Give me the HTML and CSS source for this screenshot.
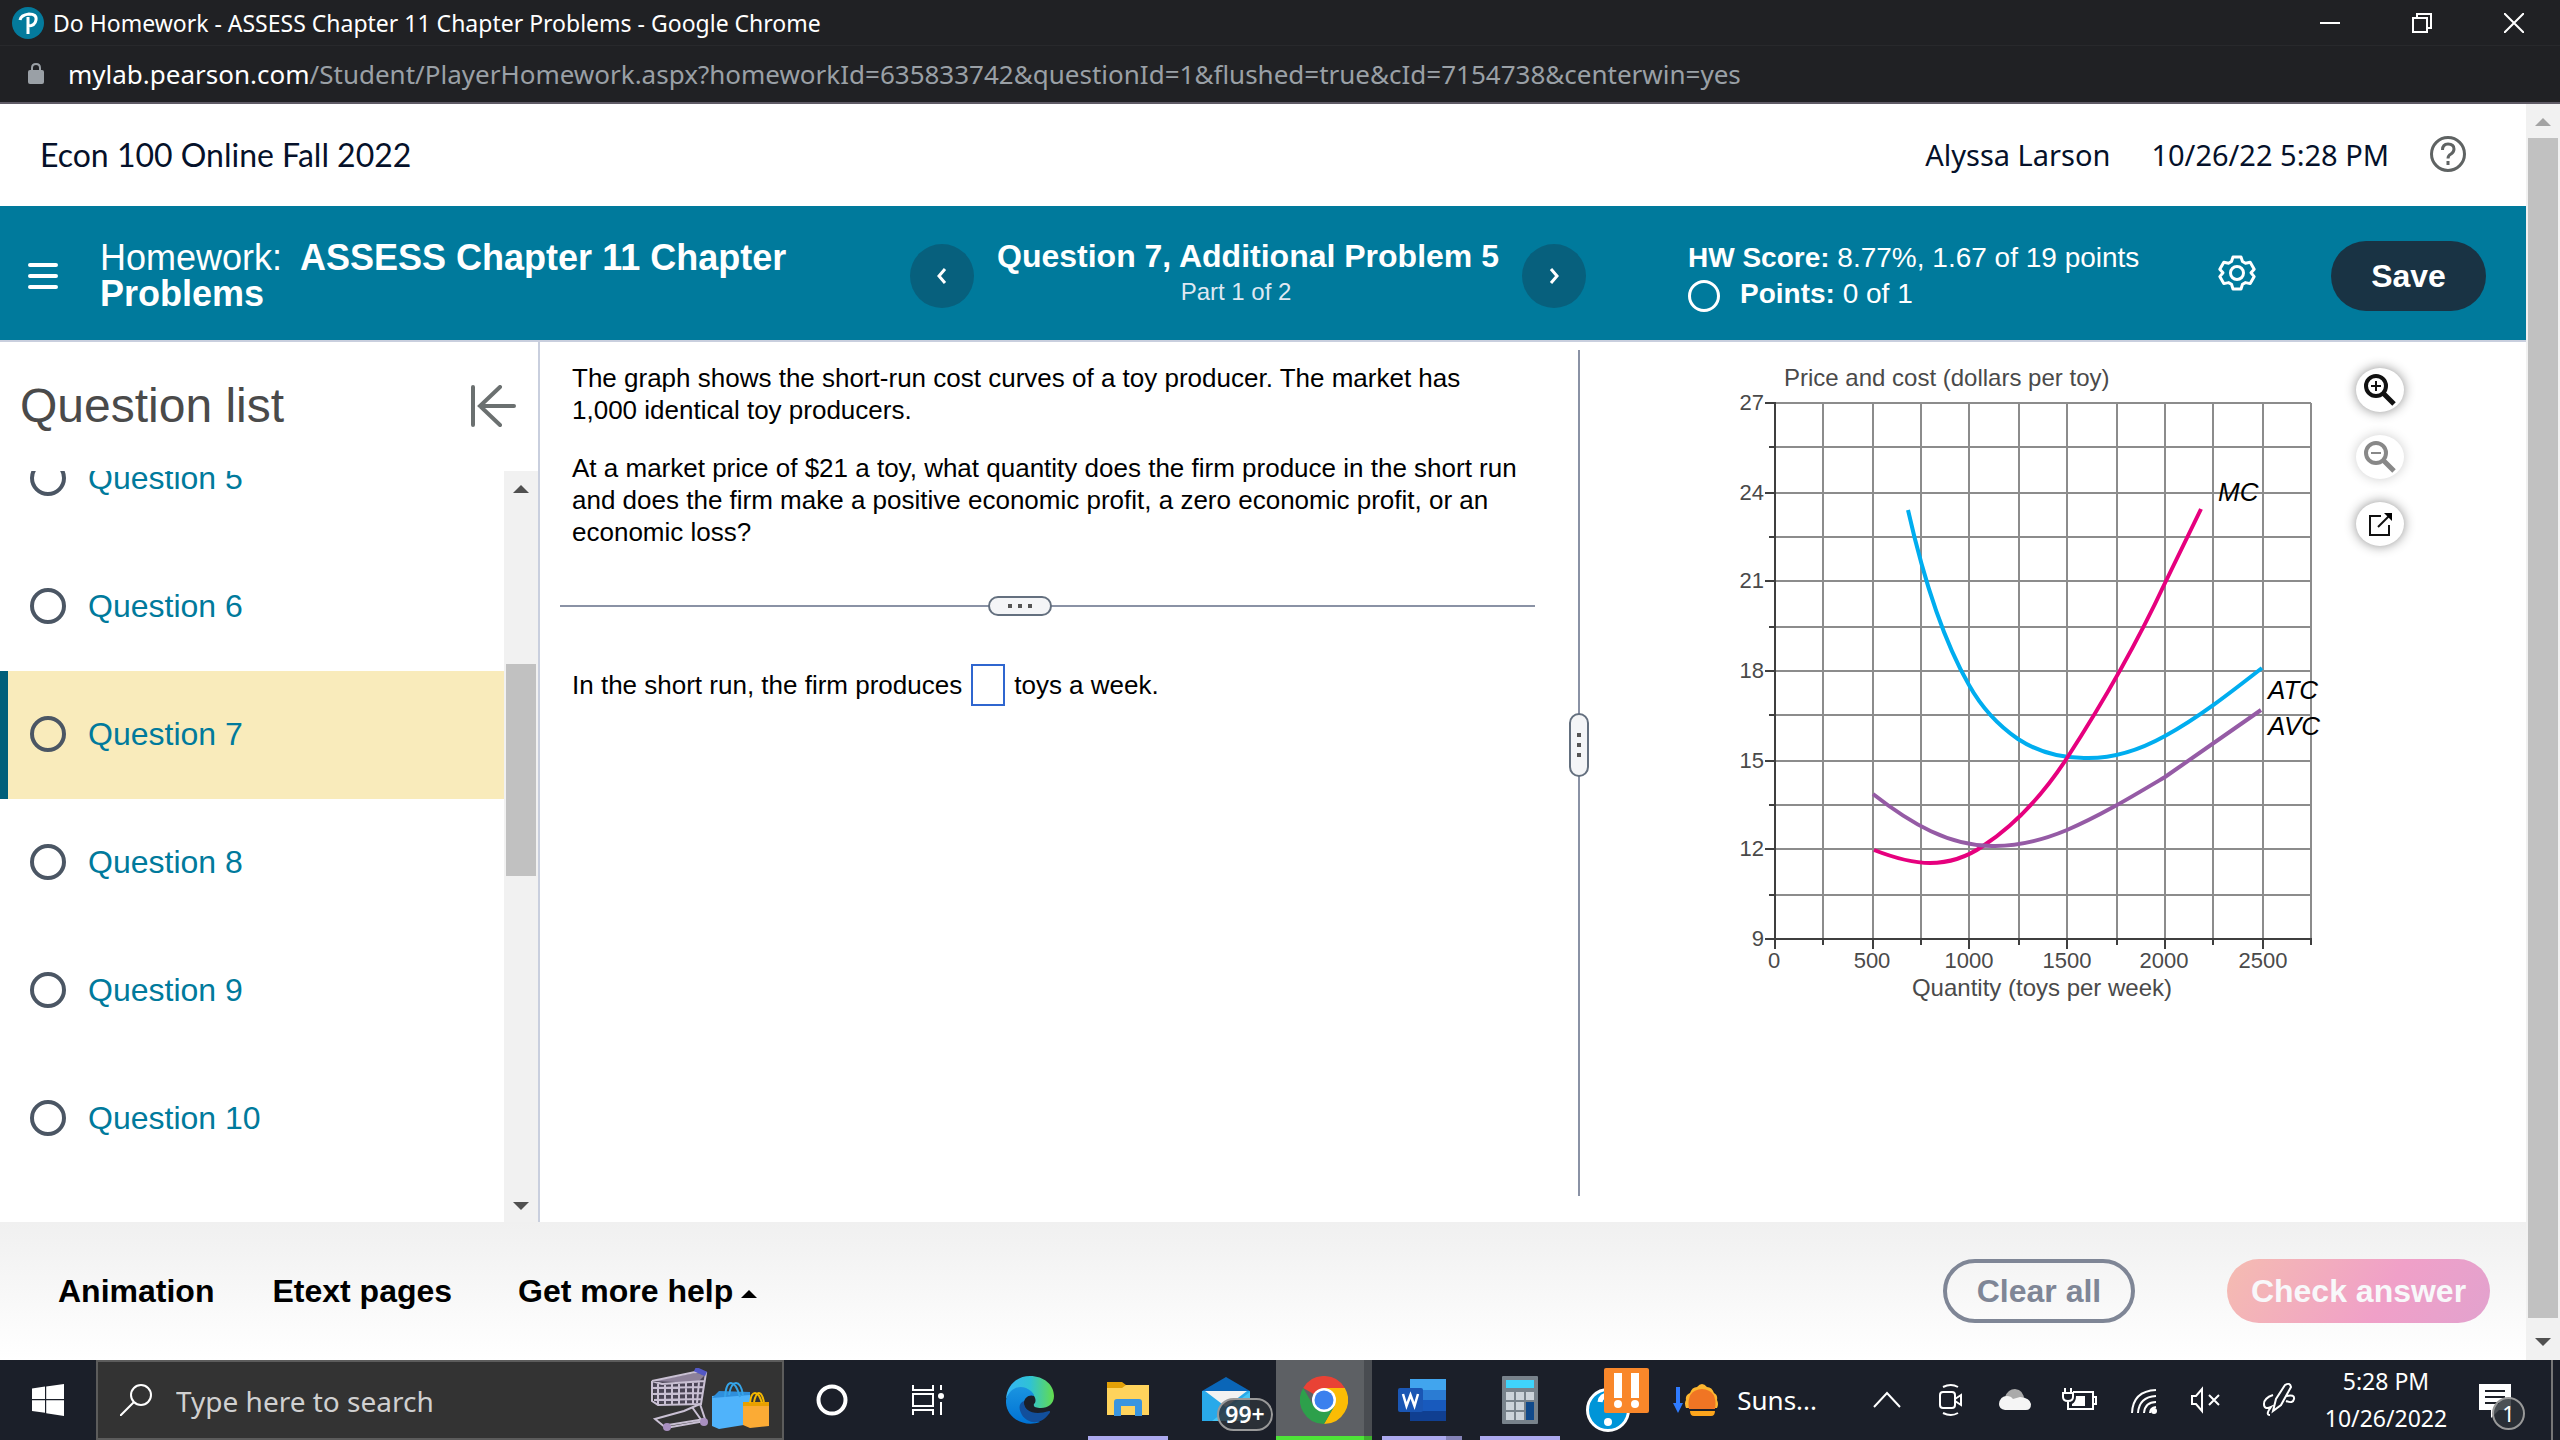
FILE: index.html
```html
<!DOCTYPE html>
<html lang="en">
<head>
  <meta charset="UTF-8">
  <meta name="viewport" content="width=device-width, initial-scale=1.0">
  <title>Do Homework - ASSESS Chapter 11 Chapter Problems</title>
  <link rel="stylesheet" href="styles.css">
</head>
<body>
  <!-- Browser window -->
  <header class="window-bar">
    <svg class="favicon" viewBox="0 0 32 32"><circle cx="16" cy="16" r="16" fill="#047a9c"/><path d="M8 13q1-5 9-6 8 0 7 6-1 6-8 6M16 10v17" fill="none" stroke="#fff" stroke-width="3"/></svg>
    <span class="window-title">Do Homework - ASSESS Chapter 11 Chapter Problems - Google Chrome</span>
    <div class="window-controls">
      <button aria-label="Minimize"><svg viewBox="0 0 20 20"><path d="M0 10h20"/></svg></button>
      <button aria-label="Restore"><svg viewBox="0 0 20 20"><path d="M1 5h14v14H1zM5 5V1h14v14h-4"/></svg></button>
      <button aria-label="Close"><svg viewBox="0 0 20 20"><path d="M0 0l20 20M20 0L0 20"/></svg></button>
    </div>
  </header>
  <div class="url-bar">
    <svg class="lock" viewBox="0 0 16 22"><rect y="7" width="16" height="14" rx="2" fill="#9aa0a6"/><path d="M4 8V5q0-4 4-4t4 4v3" fill="none" stroke="#9aa0a6" stroke-width="2"/></svg>
    <span><b>mylab.pearson.com</b>/Student/PlayerHomework.aspx?homeworkId=635833742&amp;questionId=1&amp;flushed=true&amp;cId=7154738&amp;centerwin=yes</span>
  </div>

  <div class="viewport">
    <div class="page">
      <div class="course-bar">
        <span class="course-name">Econ 100 Online Fall 2022</span>
        <span class="user-name">Alyssa Larson</span>
        <span class="user-name">10/26/22 5:28 PM</span>
        <button class="help" aria-label="Help"><svg viewBox="0 0 36 36"><circle cx="18" cy="18" r="16.500"/><path d="M12.500 14q0-6 5.500-6 6 0 6 5 0 3-3 5-3 1.500-3 4.500M18 25v4"/></svg></button>
      </div>

      <div class="hw-bar">
        <div class="hw-left">
          <button class="menu" aria-label="Menu"><svg viewBox="0 0 30 26"><path d="M2 2h26M2 13h26M2 24h26"/></svg></button>
          <h1>Homework: <b>ASSESS Chapter 11 Chapter Problems</b></h1>
        </div>
        <nav class="question-nav">
          <button class="round-nav" aria-label="Previous question"><svg viewBox="0 0 10 16"><path d="M8 1L2 8l6 7"/></svg></button>
          <div class="question-name">
            <h2>Question 7, Additional Problem 5</h2>
            <p>Part 1 of 2</p>
          </div>
          <button class="round-nav" aria-label="Next question"><svg viewBox="0 0 10 16"><path d="M2 1l6 7-6 7"/></svg></button>
        </nav>
        <div class="score">
          <p><b>HW Score:</b> 8.77%, 1.67 of 19 points</p>
          <p class="points"><span class="score-circle"></span><span><b>Points:</b> 0 of 1</span></p>
        </div>
        <button class="settings" aria-label="Settings"><svg viewBox="0 0 36 36"><path d="M14 2h8l1.500 4.500 3 1.700 4.700-1 4 7-3.200 3.600 3.200 3.800-4 7-4.700-1-3 1.700L22 34h-8l-1.500-4.700-3-1.700-4.700 1-4-7L4 17.800.8 14.200l4-7 4.700 1 3-1.700z"/><circle cx="18" cy="18" r="6.500"/></svg></button>
        <button class="save">Save</button>
      </div>

      <main class="workspace">
        <aside class="sidebar">
          <div class="sidebar-head">
            <h2>Question list</h2>
            <button aria-label="Collapse question list"><svg viewBox="0 0 46 42"><path d="M3 2v38M44 21H10M30 2L10 21l20 19"/></svg></button>
          </div>
          <div class="list-window">
            <ul class="question-list">
              <li><a href="#"><i></i>Question 5</a></li>
              <li><a href="#"><i></i>Question 6</a></li>
              <li class="active"><a href="#"><i></i>Question 7</a></li>
              <li><a href="#"><i></i>Question 8</a></li>
              <li><a href="#"><i></i>Question 9</a></li>
              <li><a href="#"><i></i>Question 10</a></li>
            </ul>
            <div class="scrollbar list-scroll">
              <span class="arrow up"></span>
              <span class="thumb"></span>
              <span class="arrow down"></span>
            </div>
          </div>
        </aside>

        <section class="question">
          <div class="question-text">
            <p>The graph shows the short-run cost curves of a toy producer. The market has 1,000 identical toy producers.</p>
            <p>At a market price of $21 a toy, what quantity does the firm produce in the short run and does the firm make a positive economic profit, a zero economic profit, or an economic loss?</p>
          </div>
          <div class="divider"><button class="grip" aria-label="Resize"><i></i><i></i><i></i></button></div>
          <div class="answer">
            <label for="quantity">In the short run, the firm produces</label>
            <input id="quantity" type="text">
            <span>toys a week.</span>
          </div>
        </section>

        <div class="divider-v"><button class="grip grip-v" aria-label="Resize panes"><i></i><i></i><i></i></button></div>

        <section class="graph">
          <svg class="chart" viewBox="0 0 640 660">
            <path class="grid" d="M123 53v536M173 53v536M221 53v536M269 53v536M319 53v536M367 53v536M417 53v536M465 53v536M513 53v536M563 53v536M611 53v536M75 53h536M75 97h536M75 143h536M75 187h536M75 231h536M75 277h536M75 321h536M75 365h536M75 411h536M75 455h536M75 499h536M75 545h536"/>
            <path class="axis" d="M75 52v547M65 589h547M65 53h10M65 143h10M65 231h10M65 321h10M65 411h10M65 499h10M69 97h6M69 187h6M69 277h6M69 365h6M69 455h6M69 545h6M173 589v10M269 589v10M367 589v10M465 589v10M563 589v10M123 589v6M221 589v6M319 589v6M417 589v6M513 589v6M611 589v6"/>
            <path class="curve atc" d="M208 160C220 213 239 283 269 335C283 360 299 376 318 389C338 402 360 408 384 408C412 409 438 401 465 386C498 368 530 343 562 318"/>
            <path class="curve mc" d="M174 500C192 507 210 513 230 513C250 513 267 507 283 496C313 476 343 445 367 408C404 351 437 293 465 233L501 159"/>
            <path class="curve avc" d="M173 444C210 473 250 497 295 496C318 496 343 490 367 480C400 466 433 446 465 427L561 360"/>
            <text class="axis-title" x="84" y="36">Price and cost (dollars per toy)</text>
            <g class="ticks end">
              <text x="64" y="60">27</text>
              <text x="64" y="150">24</text>
              <text x="64" y="238">21</text>
              <text x="64" y="328">18</text>
              <text x="64" y="418">15</text>
              <text x="64" y="506">12</text>
              <text x="64" y="596">9</text>
            </g>
            <g class="ticks mid">
              <text x="74" y="618">0</text>
              <text x="172" y="618">500</text>
              <text x="269" y="618">1000</text>
              <text x="367" y="618">1500</text>
              <text x="464" y="618">2000</text>
              <text x="563" y="618">2500</text>
              <text class="axis-title" x="342" y="646">Quantity (toys per week)</text>
            </g>
            <g class="curve-names">
              <text x="518" y="151">MC</text>
              <text x="568" y="349">ATC</text>
              <text x="568" y="385">AVC</text>
            </g>
          </svg>
          <div class="graph-tools">
            <button aria-label="Zoom in"><svg viewBox="0 0 32 32"><circle cx="12" cy="12" r="10" stroke-width="4"/><path d="M12 7v10M7 12h10" stroke-width="2"/><path d="M19 19l11 11" stroke-width="5"/></svg></button>
            <button aria-label="Zoom out" disabled><svg viewBox="0 0 32 32"><circle cx="12" cy="12" r="10" stroke-width="4"/><path d="M7 12h10" stroke-width="2"/><path d="M19 19l11 11" stroke-width="5"/></svg></button>
            <button aria-label="Open in new window"><svg viewBox="0 0 32 32"><path d="M17 8H6v19h19V17" stroke-width="2"/><path d="M14 19L25 8" stroke-width="2"/><path d="M20 5h8v8z" fill="#000" stroke="none"/></svg></button>
          </div>
        </section>
      </main>

      <footer class="actions">
        <a href="#">Animation</a>
        <a href="#">Etext pages</a>
        <a href="#" class="more-help">Get more help<span class="arrow up"></span></a>
        <button class="clear">Clear all</button>
        <button class="check">Check answer</button>
      </footer>
    </div>
    <div class="scrollbar page-scroll">
      <span class="arrow up"></span>
      <span class="thumb"></span>
      <span class="arrow down"></span>
    </div>
  </div>

  <!-- Windows taskbar -->
  <div class="taskbar">
    <button class="start" aria-label="Start"><svg viewBox="0 0 32 32" fill="#fff"><path d="M0 4.500L13 2.600V15H0zM14.200 2.400L32 0v15H14.200zM0 16.200h13v12.500L0 27zM14.200 16.200H32V32l-17.800-2.700z"/></svg></button>
    <div class="search">
      <svg class="magnifier" viewBox="0 0 32 32"><circle cx="21" cy="11" r="10"/><path d="M14 18L0 32"/></svg>
      <input type="text" placeholder="Type here to search" aria-label="Type here to search">
      <svg class="shopping" viewBox="0 0 120 64">
        <path d="M2 14L45 4 56 6 50 36 5 35z" fill="#4a4455"/>
        <path d="M3 13L45 5l10 2-8 8z" fill="#8d8199"/>
        <g fill="none" stroke="#c9c0d3" stroke-width="2">
          <path d="M2 13v20l6 4 43-1 5-31-11-1L2 13l10 3 42-3M2 20l52-1M3 26l50-1M4 32l48-1M8 15v21M15 16v20M22 16v20M29 15v21M36 15v21M43 14v22M49 14l-2 21"/>
          <path d="M50 36l5 15-37 6M50 36L34 43 5 51l11 9 39-7M42 39l10 14"/>
        </g>
        <path d="M45 1l11 5" stroke="#5358c6" stroke-width="5"/>
        <circle cx="17" cy="59" r="4" fill="#a88fc0"/><circle cx="54" cy="54" r="4" fill="#a88fc0"/>
        <path d="M62 28l38-4v32l-31 5-7-3z" fill="#4fb3fb"/><path d="M62 30l38-3v-3l-31-1z" fill="#2f8fdc"/>
        <path d="M75 29q1-14 6-14t9 14M79 27q2-12 7-12t7 12" fill="none" stroke="#35a4e8" stroke-width="2"/>
        <path d="M93 34h26v24l-19 2-7-3z" fill="#fbab35"/><path d="M93 34h26v4H93z" fill="#e9a000"/>
        <path d="M100 35q1-10 5-10t7 10M104 34q2-9 5-9t5 9" fill="none" stroke="#f5b800" stroke-width="2"/>
      </svg>
    </div>
    <div class="system-apps">
      <button class="task" aria-label="Cortana"><svg viewBox="0 0 48 48"><circle cx="24" cy="24" r="13.500" fill="none" stroke="#fff" stroke-width="4"/></svg></button>
      <button class="task" aria-label="Task view"><svg viewBox="0 0 48 48" fill="none" stroke="#fff" stroke-width="2"><path d="M9 9v5h20V9M9 18h20v12H9zM9 39v-5h20v5M37 9v5M37 26v13"/><circle cx="37" cy="20" r="3" fill="#fff" stroke="none"/></svg></button>
    </div>
    <div class="apps">
      <button class="task" aria-label="Edge">
        <svg viewBox="0 0 48 48">
          <defs>
            <linearGradient id="edgeTop"><stop offset="0" stop-color="#35b4f5"/><stop offset=".5" stop-color="#2fc2d5"/><stop offset="1" stop-color="#64dc4c"/></linearGradient>
            <linearGradient id="edgeSide" x2="0" y2="1"><stop offset="0" stop-color="#1a94e0"/><stop offset="1" stop-color="#0072d4"/></linearGradient>
          </defs>
          <path d="M0 23C1 9 11 0 24 0c14 0 24 9 24 20 0 8-6 12-13 12-5 0-8-1-7-4 2-2 2-5 0-8C23 11 8 9 0 23z" fill="url(#edgeTop)"/>
          <path d="M0 24C3 13 12 9 20 12q7 3 8 8c-5-2-11 2-10 9 1 8 7 13 16 17C17 52-1 41 0 24z" fill="url(#edgeSide)"/>
          <path d="M18 25c-1 10 10 15 25 10 2 0 1 2-1 4-8 10-20 9-26 0-4-7-3-12 2-14z" fill="#124f9c"/>
        </svg>
      </button>
      <button class="task open" aria-label="File Explorer"><svg viewBox="0 0 48 48"><path d="M3 6h15l4 3h21v10H3z" fill="#e3a007"/><path d="M3 12h15l4-3h23v30H3z" fill="#ffd35c"/><path d="M10 40V26q0-3 3-3h22q3 0 3 3v14h-7V30H17v10z" fill="#3a95df"/></svg></button>
      <button class="task" aria-label="Mail">
        <svg viewBox="0 0 48 48"><path d="M0 15L24 1l24 14z" fill="#0a66b8"/><path d="M0 15h48v30H0z" fill="#29a9e9"/><path d="M3 15h42L24 31z" fill="#f2f2f2"/><path d="M48 16L10 45h38z" fill="#47c6f4"/></svg>
        <span class="count">99+</span>
      </button>
      <button class="task current" aria-label="Chrome"><svg viewBox="0 0 48 48"><path d="M24 24L3.200 12A24 24 0 0 1 44.800 12z" fill="#e94235"/><path d="M24 12h20.800A24 24 0 0 1 24 48l10.400-18z" fill="#fbbc05"/><path d="M3.200 12A24 24 0 0 0 24 48l10.400-18H13.600z" fill="#2da04b"/><circle cx="24" cy="24" r="12" fill="#fff"/><circle cx="24" cy="24" r="9.500" fill="#3b80ee"/></svg></button>
      <button class="task open many" aria-label="Word"><svg viewBox="0 0 48 48"><path d="M12 3h36v11H12z" fill="#41a5ee"/><path d="M12 14h36v10H12z" fill="#2b7cd3"/><path d="M12 24h36v11H12z" fill="#185abd"/><path d="M12 35h36v10H12z" fill="#103f91"/><rect y="12" width="25" height="24" rx="2" fill="#1a56b4"/><path d="M5 18l3.500 12 4-11 4 11L20 18" fill="none" stroke="#fff" stroke-width="2.500"/></svg></button>
      <button class="task open" aria-label="Calculator"><svg viewBox="0 0 48 48"><rect x="6" width="36" height="48" rx="1" fill="#78828b"/><path d="M10 4h28v8H10z" fill="#3fd3fb"/><path d="M10 16h8v8h-8zM20 16h8v8h-8zM30 16h8v8h-8zM10 26h8v8h-8zM20 26h8v8h-8zM10 36h8v8h-8zM20 36h8v8h-8z" fill="#ccd3da"/><path d="M30 26h8v18h-8z" fill="#114a8b"/></svg></button>
      <button class="task" aria-label="Support"><svg class="support" viewBox="0 0 64 64"><circle cx="22" cy="42" r="20.500" fill="#0095d8" stroke="#fff" stroke-width="3"/><path d="M14 34q1-7 9-7" fill="none" stroke="#fff" stroke-width="5"/><circle cx="22" cy="54" r="4" fill="#fff"/><rect x="18" width="45" height="45" rx="2" fill="#f9872a"/><path d="M28 5h8v25h-8zM45 5h8v25h-8z" fill="#fff"/><circle cx="32" cy="36" r="4" fill="#fff"/><circle cx="49" cy="36" r="4" fill="#fff"/></svg></button>
    </div>
    <div class="weather">
      <svg viewBox="0 0 48 34"><path d="M3 4v16H0l5 10 5-10H7V4z" fill="#2f7bff"/><path d="M13 25q-2-5 0-8-1-5 4-7 2-6 7-6 5-6 10 0 5 0 7 6 4 2 3 7 2 4 0 8z" fill="#fdb62f"/><path d="M16 26q-3-19 13-20 16 1 13 20z" fill="#f07524"/><path d="M17 28h25q0 5-4 5H21q-4 0-4-5z" fill="#fda51c"/></svg>
      <span>Suns...</span>
    </div>
    <div class="tray">
      <button aria-label="Hidden icons"><svg viewBox="0 0 36 36"><path d="M5 25l13-14 13 14"/></svg></button>
      <button aria-label="Meet now"><svg viewBox="0 0 36 36"><rect x="7" y="10" width="15" height="16" rx="3"/><path d="M22 17l6-4v10l-6-4M10 5q8-4 15 0M10 31q8 4 15 0"/></svg></button>
      <button aria-label="OneDrive"><svg viewBox="0 0 36 36"><path d="M8 15q3-8 10-8 9 1 9 11v8z" fill="#aaa" stroke="none"/><path d="M8 28q-6-1-6-6 1-8 8-8 4 0 6 3l7-2q10 1 11 7 0 6-5 6z" fill="#f5f5f5" stroke="none"/></svg></button>
      <button aria-label="Battery"><svg viewBox="0 0 36 36"><path d="M12 10h20v17H7v-7M32 15h3v7h-3M2 11h10v4q0 4-5 4t-5-4zM4 6v5M10 6v5"/><path d="M15 14h9v10H11v-2q4-2 4-8z" fill="#fff" stroke="none"/></svg></button>
      <button aria-label="Wi-Fi"><svg viewBox="0 0 36 36"><path d="M7 31Q8 9 31 8M13 31q1-16 18-17M19 31q1-11 12-11M25 31q0-5 6-6"/><circle cx="29" cy="29" r="3" fill="#fff" stroke="none"/></svg></button>
      <button aria-label="Volume"><svg viewBox="0 0 36 36"><path d="M3 14h4l6-7v22l-6-7H3zM20 13l10 10M30 13L20 23"/></svg></button>
      <button class="pen" aria-label="Windows Ink"><svg viewBox="0 0 36 36"><path d="M12 29l3-12L24 3q5-3 6 2L20 23zM12 13q-9 3-9 9t7 3q-6 8-1 8M25 14q9-2 8 3t-8 2"/></svg></button>
      <div class="clock"><span>5:28 PM</span><span>10/26/2022</span></div>
      <button class="notes" aria-label="Notifications">
        <svg viewBox="0 0 36 36"><path d="M2 2h32v26H22l-8 8v-8H2z" fill="#fff" stroke="none"/><path d="M8 9h20M8 15h20M8 21h14" stroke="#1c1f27"/></svg>
        <span class="note-count">1</span>
      </button>
    </div>
  </div>
</body>
</html>
```
FILE: styles.css
```css
* {
  box-sizing: border-box;
}

body {
  margin: 0;
  min-height: 100vh;
  display: flex;
  flex-direction: column;
  font-family: "Liberation Sans", Arial, sans-serif;
  background-color: #fff;
  color: #000;
}

h1, h2, p, ul {
  margin: 0;
  padding: 0;
}

button {
  display: flex;
  align-items: center;
  justify-content: center;
  padding: 0;
  border: none;
  background: none;
  font-family: inherit;
  color: inherit;
  cursor: pointer;
}

a {
  color: inherit;
  text-decoration: none;
}

svg {
  display: block;
}

/* Browser window */

.window-bar {
  height: 46px;
  display: flex;
  align-items: center;
  padding-left: 12px;
  background-color: #202124;
  border-bottom: 1px solid #28292c;
  color: #fff;
  font-family: "Noto Sans", sans-serif;
  font-size: 23px;
}

.favicon {
  width: 32px;
  height: 32px;
  margin-right: 9px;
}

.window-controls {
  display: flex;
  margin-left: auto;
}

.window-controls button {
  width: 92px;
  height: 44px;
}

.window-controls svg {
  width: 20px;
  height: 20px;
  fill: none;
  stroke: #fff;
  stroke-width: 2;
}

.url-bar {
  height: 58px;
  display: flex;
  align-items: center;
  gap: 24px;
  padding-left: 28px;
  background-color: #202124;
  border-bottom: 2px solid #5f5b66;
  color: #9aa0a6;
  font-family: "Noto Sans", sans-serif;
  font-size: 26px;
}

.url-bar b {
  color: #fff;
  font-weight: 400;
}

.lock {
  width: 16px;
  height: 22px;
}

.viewport {
  flex: 1;
  display: flex;
}

.page {
  flex: 1;
  display: flex;
  flex-direction: column;
}

/* Scrollbars */

.scrollbar {
  width: 34px;
  display: flex;
  flex-direction: column;
  align-items: center;
  background-color: #f1f1f1;
}

.thumb {
  width: 30px;
  background-color: #c1c1c1;
}

.arrow {
  border: 8px solid transparent;
}

.arrow.up {
  border-top: none;
  border-bottom-color: #505050;
}

.arrow.down {
  border-bottom: none;
  border-top-color: #505050;
}

.page-scroll {
  padding: 14px 0;
  justify-content: space-between;
}

.page-scroll .thumb {
  flex: 1;
  margin: 12px 0 20px;
}

.page-scroll .arrow.up {
  border-bottom-color: #a3a3a3;
}

/* Course header */

.course-bar {
  height: 102px;
  display: flex;
  align-items: center;
  padding: 0 60px 2px 40px;
  color: #05112a;
}

.course-name {
  margin-right: auto;
  font-family: Lato, sans-serif;
  font-size: 32px;
}

.user-name {
  margin-right: 41px;
  font-family: "Noto Sans", sans-serif;
  font-size: 29px;
}

.help svg {
  width: 36px;
  height: 36px;
  fill: none;
  stroke: #5f6363;
  stroke-width: 3;
}

.hw-bar {
  height: 136px;
  display: grid;
  grid-template-columns: minmax(600px, 882px) auto 1fr auto auto;
  align-items: center;
  padding: 6px 40px 0 28px;
  background-color: #007a9c;
  border-bottom: 2px solid #c9cfde;
  color: #fff;
}

.hw-left {
  display: flex;
  align-items: center;
  gap: 42px;
  padding-right: 100px;
}

.menu svg {
  width: 30px;
  height: 26px;
  stroke: #fff;
  stroke-width: 4;
  stroke-linecap: round;
}

h1 {
  font-size: 36px;
  line-height: 36px;
  font-weight: 400;
}

h1 b {
  margin-left: 8px;
}

.question-nav {
  display: flex;
  align-items: center;
}

.round-nav {
  width: 64px;
  height: 64px;
  border-radius: 50%;
  background-color: #07607d;
}

.round-nav svg {
  width: 10px;
  height: 16px;
  fill: none;
  stroke: #fff;
  stroke-width: 3;
}

.question-name {
  width: 548px;
  margin-bottom: 8px;
  text-align: center;
}

.question-name h2 {
  font-size: 32px;
  line-height: 40px;
}

.question-name p {
  padding-right: 24px;
  font-size: 24px;
  line-height: 32px;
  color: #dfe8f2;
}

.score {
  padding-left: 102px;
  font-size: 28px;
  line-height: 36px;
}

.points {
  display: flex;
  align-items: center;
  gap: 20px;
}

.score-circle {
  width: 32px;
  height: 32px;
  margin-top: 4px;
  border: 3px solid #fff;
  border-radius: 50%;
}

.settings svg {
  width: 36px;
  height: 36px;
  margin: 0 76px 6px 0;
  fill: none;
  stroke: #fff;
  stroke-width: 3;
  stroke-linejoin: round;
  overflow: visible;
}

.save {
  width: 155px;
  height: 70px;
  border-radius: 35px;
  background-color: #193344;
  font-size: 32px;
  font-weight: 700;
}

/* Workspace */

.workspace {
  flex: 1;
  display: grid;
  grid-template-columns: 540px minmax(0, 1029px) 20px 1fr;
}

.sidebar {
  display: flex;
  flex-direction: column;
  border-right: 2px solid #c9cfde;
}

.sidebar-head {
  height: 129px;
  display: flex;
  align-items: center;
  justify-content: space-between;
  padding: 0 22px 2px 20px;
}

.sidebar-head h2 {
  font-size: 48px;
  font-weight: 400;
  color: #4a4a4a;
}

.sidebar-head svg {
  width: 46px;
  height: 42px;
  fill: none;
  stroke: #6b7070;
  stroke-width: 4;
  stroke-linecap: round;
}

.list-window {
  flex: 1;
  display: flex;
  height: 750px;
  overflow: hidden;
}

/* list is scrolled part way down */
.question-list {
  flex: 1;
  margin-top: -56px;
  list-style: none;
}

.question-list a {
  height: 128px;
  display: flex;
  align-items: center;
  gap: 22px;
  padding: 0 0 2px 22px;
  border-left: 8px solid transparent;
  font-size: 32px;
  color: #007a9c;
}

.question-list i {
  width: 36px;
  height: 36px;
  border: 4px solid #4b5664;
  border-radius: 50%;
}

.question-list .active a {
  border-left-color: #005f7a;
  background-color: #f9ebbb;
}

.list-scroll {
  padding: 14px 0 12px;
}

.list-scroll .thumb {
  height: 212px;
  margin: 171px 0 auto;
}

.question {
  padding: 20px 34px 0 20px;
  font-size: 26px;
  line-height: 32px;
}

.question-text {
  padding: 0 12px;
}

.question-text p {
  margin-bottom: 26px;
}

.divider {
  height: 2px;
  display: flex;
  align-items: center;
  justify-content: center;
  margin: 57px 0;
  padding-right: 56px;
  background-color: #8a92a5;
}

.grip {
  width: 64px;
  height: 20px;
  flex: none;
  gap: 6px;
  border: 2px solid #64707f;
  border-radius: 10px;
  background-color: #f4f5f7;
}

.grip i {
  width: 4px;
  height: 4px;
  background-color: #555;
}

.divider-v {
  display: flex;
  align-items: center;
  justify-content: center;
  margin: 8px 0 26px;
  background: linear-gradient(#8a92a5, #8a92a5) center / 2px 100% no-repeat;
}

.grip-v {
  width: 20px;
  height: 64px;
  flex-direction: column;
  margin-top: -56px;
}

.answer {
  display: flex;
  align-items: center;
  gap: 9px;
  padding: 0 12px;
}

.answer input {
  width: 34px;
  height: 42px;
  border: 2px solid #2f66cf;
  font-size: 26px;
}

.graph {
  display: flex;
  align-items: flex-start;
  gap: 16px;
  padding: 8px 0 0 111px;
}

.chart {
  width: 640px;
  height: 660px;
  fill: #4a4a4a;
}

.grid {
  fill: none;
  stroke: #8c8c8c;
  stroke-width: 2;
}

.axis {
  fill: none;
  stroke: #3f3f3f;
  stroke-width: 2;
}

.curve {
  fill: none;
  stroke-width: 4;
}

.atc {
  stroke: #00adef;
}

.mc {
  stroke: #e6007e;
}

.avc {
  stroke: #955ba5;
}

.ticks {
  font-size: 22px;
}

.end {
  text-anchor: end;
}

.mid {
  text-anchor: middle;
}

.axis-title {
  font-size: 24px;
}

.curve-names {
  font-size: 26px;
  font-style: italic;
  fill: #000;
}

.graph-tools {
  display: flex;
  flex-direction: column;
  gap: 23px;
  padding-top: 18px;
}

.graph-tools button {
  width: 48px;
  height: 44px;
  border-radius: 50%;
  background-color: #fff;
  box-shadow: 0 0 12px rgba(0, 0, 0, .45);
}

.graph-tools button:disabled {
  box-shadow: 0 0 12px rgba(0, 0, 0, .2);
}

.graph-tools svg {
  width: 32px;
  height: 32px;
  fill: none;
  stroke: #111;
}

.graph-tools button:disabled svg {
  stroke: #888;
}

/* Bottom actions */

.actions {
  height: 138px;
  display: flex;
  align-items: center;
  gap: 58px;
  padding: 0 36px 0 58px;
  background: linear-gradient(#f0f0f0, #fff);
  font-size: 32px;
  font-weight: 700;
}

.more-help {
  display: flex;
  align-items: center;
  gap: 8px;
  margin-left: 8px;
}

.more-help .arrow {
  margin-top: 6px;
  border-bottom-color: #000;
}

.actions button {
  height: 64px;
  border-radius: 32px;
  font-size: 32px;
  font-weight: 700;
}

.actions .clear {
  width: 192px;
  margin: 0 34px 0 auto;
  border: 4px solid #7f8696;
  color: #7f8696;
}

.actions .check {
  width: 263px;
  background: linear-gradient(120deg, #f5bcb1, #f0a0c8 60%, #e2a2ce);
  color: #f8f8fa;
}

/* Taskbar */

.taskbar {
  height: 80px;
  display: flex;
  background-color: #1b1f29;
  color: #fff;
  font-family: "Noto Sans", sans-serif;
}

.start {
  width: 96px;
}

.start svg {
  width: 32px;
  height: 32px;
}

.search {
  width: 688px;
  display: flex;
  align-items: center;
  padding: 0 12px 0 22px;
  background-color: #333;
  border: 2px solid #5c5c5c;
}

.magnifier {
  width: 32px;
  height: 32px;
  fill: none;
  stroke: #fff;
  stroke-width: 2;
}

.search input {
  flex: 1;
  margin-left: 24px;
  padding: 2px 0 0;
  border: none;
  background: none;
  font-family: inherit;
  font-size: 28px;
}

.search input::placeholder {
  color: #d0d0d0;
}

.shopping {
  width: 120px;
  height: 64px;
}

.system-apps,
.apps {
  display: flex;
}

.apps {
  gap: 2px;
  margin-left: 6px;
}

.task {
  position: relative;
  width: 96px;
}

.task svg {
  width: 48px;
  height: 48px;
}

.task .support {
  width: 64px;
  height: 64px;
}

.open::after,
.current::after {
  content: "";
  position: absolute;
  left: 8px;
  right: 8px;
  bottom: 0;
  height: 4px;
  background-color: #aca9ee;
}

.many::after {
  background: linear-gradient(90deg, #aca9ee 80%, #8583b8 80%);
}

.current {
  background: linear-gradient(90deg, #5d6064 92%, #494c51 92%);
}

.current::after {
  left: 0;
  right: 0;
  background: linear-gradient(90deg, #4ee338 92%, #3daf2e 92%);
}

.count,
.note-count {
  position: absolute;
  border: 2px solid #999;
  background-color: rgba(45, 50, 56, .85);
}

.count {
  right: 1px;
  bottom: 9px;
  width: 56px;
  height: 33px;
  border-radius: 17px;
  font-size: 23px;
  font-weight: 600;
  line-height: 28px;
}

.weather {
  display: flex;
  align-items: center;
  gap: 16px;
  margin-left: auto;
  font-size: 26px;
}

.weather svg {
  width: 48px;
  height: 34px;
}

.tray {
  display: flex;
  align-items: center;
  margin: 0 7px 0 38px;
  border-right: 2px solid #777;
}

.tray button {
  width: 64px;
  height: 80px;
}

.tray .pen {
  width: 80px;
}

.tray svg {
  width: 36px;
  height: 36px;
  fill: none;
  stroke: #fff;
  stroke-width: 2;
}

.clock {
  width: 134px;
  display: flex;
  flex-direction: column;
  align-items: center;
  font-size: 23px;
  line-height: 37px;
}

.tray .notes {
  position: relative;
  width: 98px;
}

.notes svg {
  margin-right: 14px;
}

.note-count {
  right: 26px;
  bottom: 10px;
  width: 33px;
  height: 33px;
  border-radius: 50%;
  font-size: 22px;
  line-height: 28px;
}
```
